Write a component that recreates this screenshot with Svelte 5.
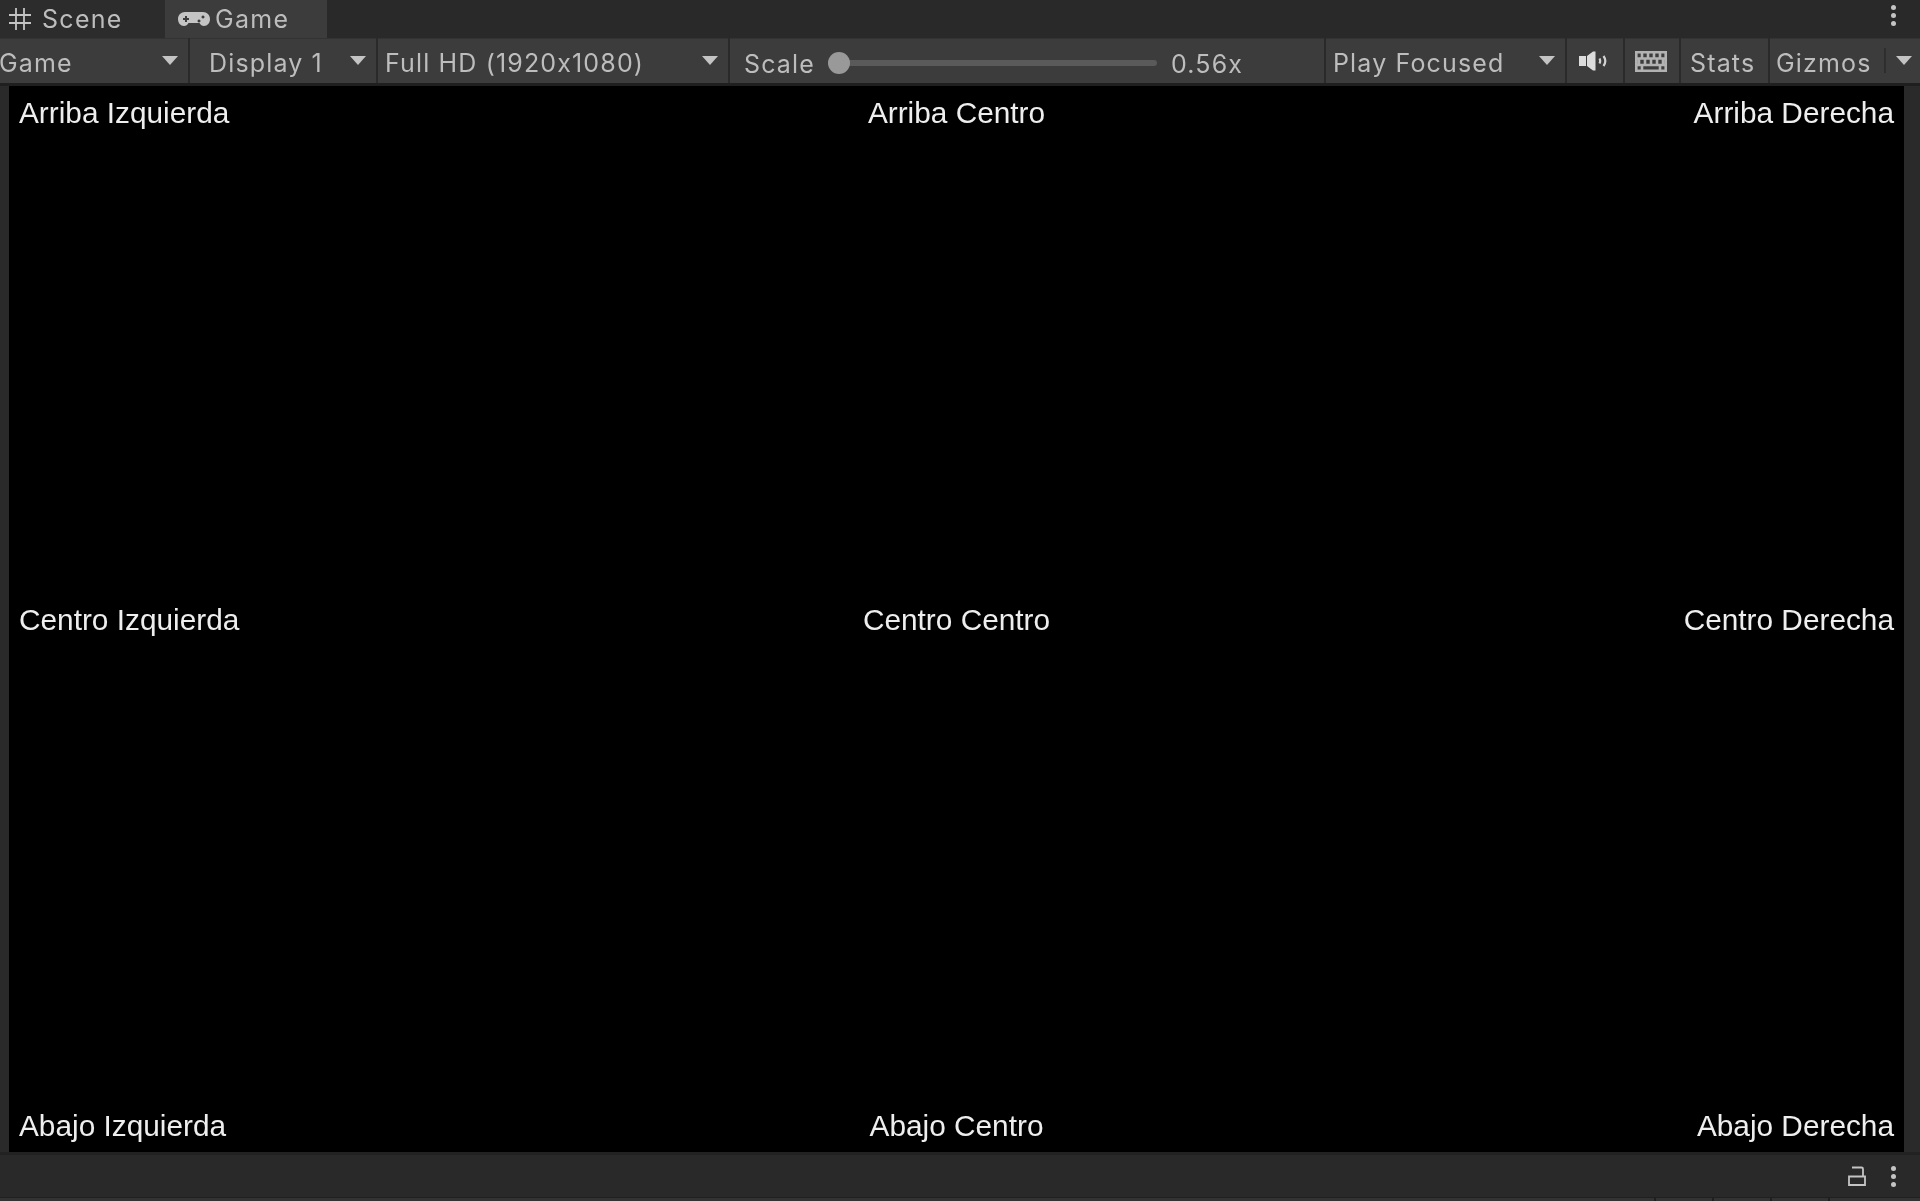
<script>
  const labels = [
    'Arriba Izquierda', 'Arriba Centro', 'Arriba Derecha',
    'Centro Izquierda', 'Centro Centro', 'Centro Derecha',
    'Abajo Izquierda', 'Abajo Centro', 'Abajo Derecha'
  ];
</script>

<div class="window">
  <div class="tabs">
    <div class="tab scene">
      <svg viewBox="0 0 24 24" width="24" height="24">
        <path d="M8 1v22M16 1v22M1 8h22M1 16h22" stroke="#c4c4c4" stroke-width="1.800" fill="none" />
      </svg>
      <span>Scene</span>
    </div>
    <div class="tab game">
      <svg viewBox="0 0 32 16" width="32" height="16">
        <path fill-rule="evenodd" fill="#c4c4c4" d="M7 1h18c4 0 7 3 7 7s-2.500 7-6 7c-2 0-3.500-1-4.500-3h-11c-1 2-2.500 3-4.500 3-3.500 0-6-3-6-7s3-7 7-7zM7 5v2H5v2h2v2h2V9h2V7H9V5zM25 4.500a1.500 1.500 0 1 0 .01 0zM21 8.500a1.500 1.500 0 1 0 .01 0z" />
      </svg>
      <span>Game</span>
    </div>
    <div class="tab-fill"></div>
    <div class="dots"><i></i><i></i><i></i></div>
  </div>

  <div class="toolbar">
    <div class="item w-game"><span class="clip">Game</span><b class="arrow"></b></div>
    <div class="item w-display"><span>Display 1</span><b class="arrow"></b></div>
    <div class="item w-res"><span>Full HD (1920x1080)</span><b class="arrow"></b></div>
    <div class="item w-scale">
      <span class="scale-label">Scale</span>
      <div class="slider"><div class="thumb"></div></div>
      <span class="scale-value">0.56x</span>
    </div>
    <div class="item w-play"><span>Play Focused</span><b class="arrow"></b></div>
    <div class="item w-sound">
      <svg viewBox="0 0 28 20" width="28" height="20">
        <path fill="#dcdcdc" d="M0 5h7v10H0zM8 5 14 .5h2.500v19H14l-6-4.500z" />
        <path fill="none" stroke="#d2d2d2" stroke-width="2.200" d="M20.500 7.500c.8 1.500.8 3.500 0 5M24.500 5c2.200 3 2.200 7 0 10" />
      </svg>
    </div>
    <div class="item w-keys">
      <svg viewBox="0 0 32 21" width="32" height="21">
        <path fill="none" stroke="#b2b2b2" stroke-width="2.600" d="M1.300 1.300h29.400v18.400H1.300zM1 7.500h30M1 14h30M7 1v6.500M13 1v6.500M19 1v6.500M25 1v6.500M4 7.500V14M10 7.500V14M16 7.500V14M22 7.500V14M28 7.500V14M7 14v6M25 14v6" />
      </svg>
    </div>
    <div class="item w-stats"><span>Stats</span></div>
    <div class="item w-gizmos">
      <span>Gizmos</span>
      <i class="divider"></i>
      <b class="arrow"></b>
    </div>
  </div>

  <div class="stage">
    <div class="view">
      {#each labels as label}
        <div class="label">{label}</div>
      {/each}
    </div>
  </div>

  <div class="footer">
    <svg viewBox="0 0 18 20" width="18" height="20">
      <path fill="none" stroke="#c4c4c4" stroke-width="1.800" d="M1 10.500h16v8.500H1zM4 1.500h9.500c1 0 1.500.700 1.500 1.500v7.500" />
    </svg>
    <div class="dots"><i></i><i></i><i></i></div>
  </div>
  <div class="bottom">
    <i></i><i></i><i></i><i></i>
  </div>
</div>

<style>
  :global(body) {
    margin: 0;
    background: #282828;
  }
  .window {
    width: 1920px;
    height: 1201px;
    display: flex;
    flex-direction: column;
    overflow: hidden;
    background: #282828;
    font-family: Inter, 'Liberation Sans', sans-serif;
    color: #bdbdbd;
    filter: blur(0.4px);
  }

  /* Tabs */
  .tabs {
    height: 38px;
    display: flex;
    align-items: stretch;
    background: #292929;
  }
  .tab {
    display: flex;
    align-items: center;
    font-size: 25px;
    letter-spacing: 1.300px;
    color: #bdbdbd;
    box-sizing: border-box;
  }
  .tab.scene {
    width: 165px;
    padding-left: 8px;
    gap: 10px;
    background: #2c2c2c;
  }
  .tab.game {
    width: 162px;
    padding-left: 13px;
    gap: 5px;
    background: #3c3c3c;
  }
  .tab-fill {
    flex: 1;
  }
  .dots {
    width: 24px;
    margin-right: 15px;
    display: flex;
    flex-direction: column;
    align-items: center;
    justify-content: center;
    gap: 3px;
  }
  .dots i {
    width: 5px;
    height: 5px;
    border-radius: 50%;
    background: #c4c4c4;
  }
  .tabs .dots {
    margin-bottom: 7px;
  }

  /* Toolbar */
  .toolbar {
    height: 45px;
    display: flex;
    gap: 2px;
    background: #2a2a2a;
    border-bottom: 3px solid #1f1f1f;
    font-size: 25px;
    letter-spacing: 1.150px;
    flex-shrink: 0;
  }
  .item {
    position: relative;
    display: flex;
    align-items: center;
    background: #3c3c3c;
    box-sizing: border-box;
    border-top: 1px solid #333;
    padding-top: 3px;
  }
  .arrow {
    position: absolute;
    top: 17px;
    right: 10px;
    width: 0;
    height: 0;
    border-left: 8px solid transparent;
    border-right: 8px solid transparent;
    border-top: 9px solid #c4c4c4;
  }
  .w-game { width: 188px; }
  .clip { margin-left: -1px; }
  .w-display { width: 186px; padding-left: 19px; }
  .w-res { width: 350px; padding-left: 7px; }
  .w-scale { width: 594px; padding-left: 14px; }
  .w-play { width: 239px; padding-left: 7px; }
  .w-sound { width: 56px; padding-left: 12px; }
  .w-sound svg { margin-top: -4px; }
  .w-keys { width: 54px; padding-left: 10px; }
  .w-keys svg { margin-top: -3px; }
  .w-stats { width: 87px; padding-left: 9px; }
  .w-gizmos { flex: 1; padding-left: 6px; }
  .scale-label {
    width: 72px;
    margin-top: 2px;
  }
  .slider {
    position: relative;
    width: 329px;
    height: 6px;
    margin-left: 12px;
    border-radius: 3px;
    background: #5a5a5a;
  }
  .thumb {
    position: absolute;
    top: -8px;
    left: 0;
    width: 22px;
    height: 22px;
    border-radius: 50%;
    background: #999;
  }
  .scale-value {
    margin-left: 14px;
    margin-top: 2px;
  }
  .divider {
    position: absolute;
    left: 114px;
    top: 9px;
    width: 2px;
    height: 25px;
    background: #2e2e2e;
  }
  .w-gizmos .arrow { right: 8px; }

  /* Game view */
  .stage {
    flex: 1;
    padding: 0 16px 0 9px;
    background: #2a2a2a;
    min-height: 0;
  }
  .view {
    height: 100%;
    box-sizing: border-box;
    padding: 10px 10px 9px;
    display: grid;
    grid-template-columns: 1fr auto 1fr;
    grid-template-rows: 1fr 1fr 1fr;
    background: #000;
    color: #eee;
    font-family: 'Liberation Sans', Arial, sans-serif;
    font-size: 29.800px;
    line-height: 34px;
  }
  .label:nth-child(3n + 2) { text-align: center; }
  .label:nth-child(3n) { text-align: right; }
  .label:nth-child(n + 4):nth-child(-n + 6) { align-self: center; }
  .label:nth-child(n + 7) { align-self: end; }

  /* Footer */
  .footer {
    height: 45px;
    display: flex;
    align-items: center;
    justify-content: flex-end;
    gap: 15px;
    border-top: 3px solid #222;
    box-sizing: border-box;
    background: #292929;
  }
  .bottom {
    height: 4px;
    display: flex;
    justify-content: flex-end;
    background: #333;
    border-top: 1px solid #1f1f1f;
    box-sizing: border-box;
    padding-right: 90px;
    gap: 56px;
  }
  .bottom i {
    width: 2px;
    background: #1f1f1f;
  }
</style>
